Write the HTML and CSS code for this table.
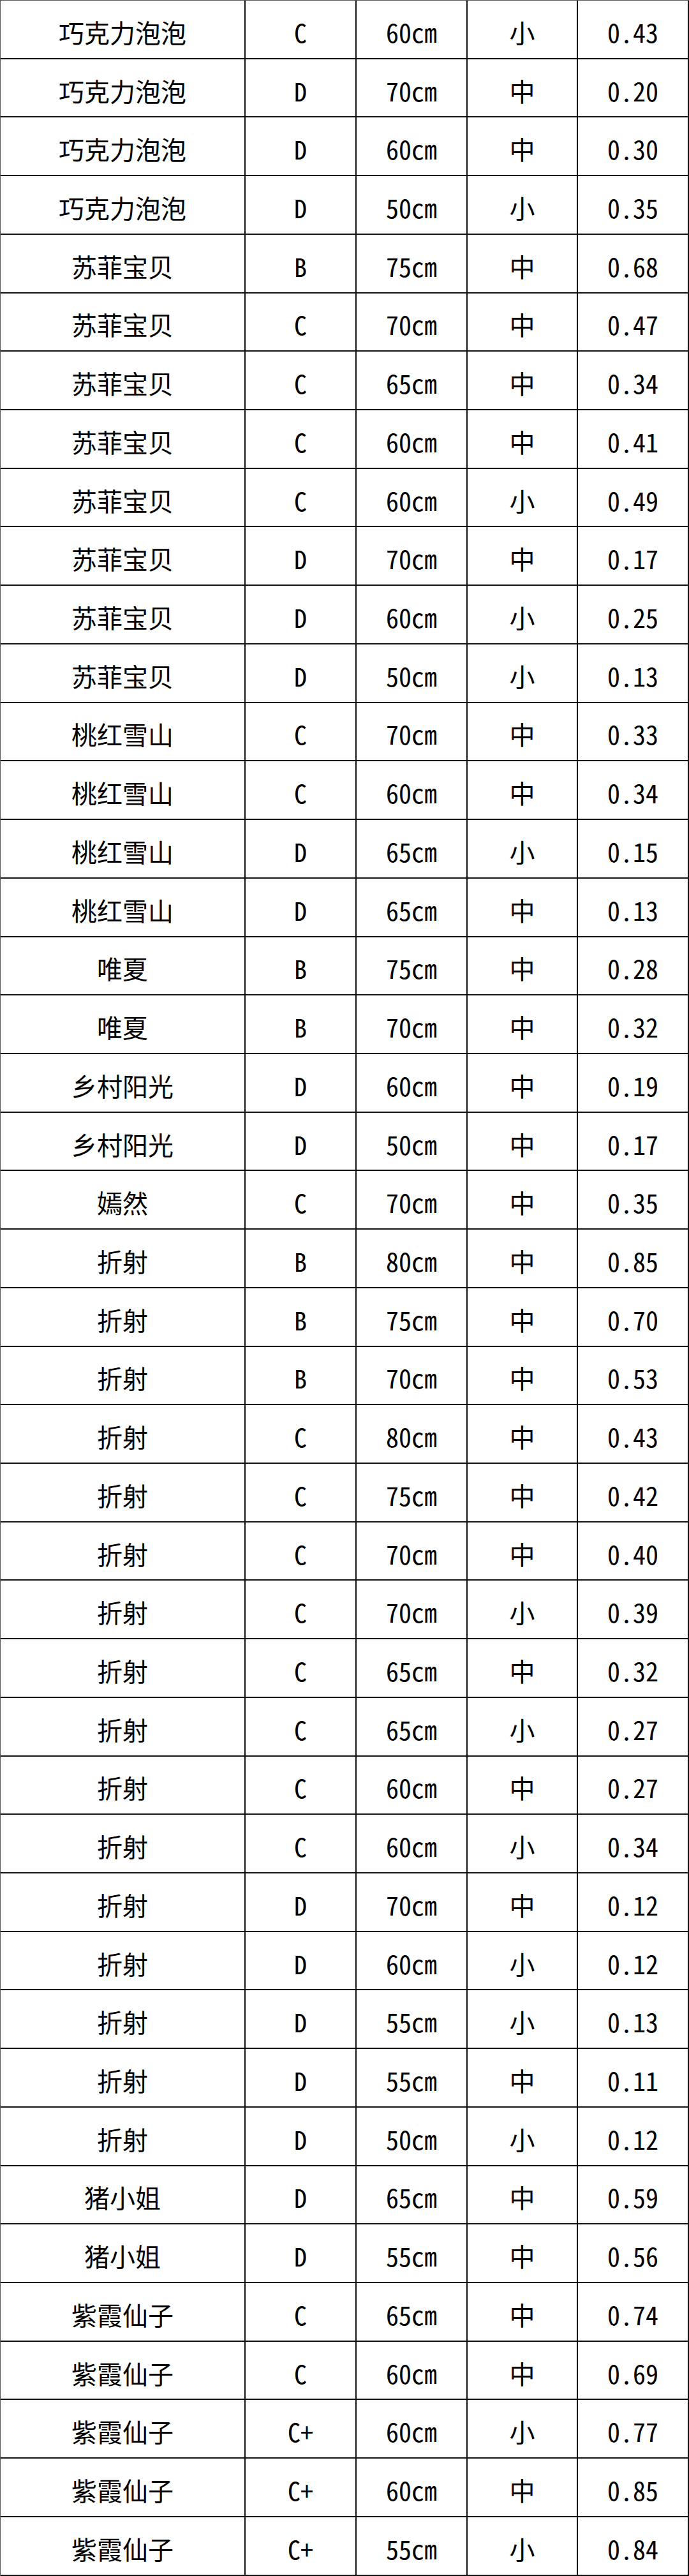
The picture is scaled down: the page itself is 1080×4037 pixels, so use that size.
FILE: index.html
```html
<!DOCTYPE html>
<html lang="zh-CN">
<head>
<meta charset="utf-8">
<title>品种规格表</title>
<link rel="stylesheet" href="styles.css">
</head>
<body>
<div class="sheet">
<div class="c">巧克力泡泡</div><div class="c">C</div><div class="c">60cm</div><div class="c">小</div><div class="c">0.43</div>
<div class="c">巧克力泡泡</div><div class="c">D</div><div class="c">70cm</div><div class="c">中</div><div class="c">0.20</div>
<div class="c">巧克力泡泡</div><div class="c">D</div><div class="c">60cm</div><div class="c">中</div><div class="c">0.30</div>
<div class="c">巧克力泡泡</div><div class="c">D</div><div class="c">50cm</div><div class="c">小</div><div class="c">0.35</div>
<div class="c">苏菲宝贝</div><div class="c">B</div><div class="c">75cm</div><div class="c">中</div><div class="c">0.68</div>
<div class="c">苏菲宝贝</div><div class="c">C</div><div class="c">70cm</div><div class="c">中</div><div class="c">0.47</div>
<div class="c">苏菲宝贝</div><div class="c">C</div><div class="c">65cm</div><div class="c">中</div><div class="c">0.34</div>
<div class="c">苏菲宝贝</div><div class="c">C</div><div class="c">60cm</div><div class="c">中</div><div class="c">0.41</div>
<div class="c">苏菲宝贝</div><div class="c">C</div><div class="c">60cm</div><div class="c">小</div><div class="c">0.49</div>
<div class="c">苏菲宝贝</div><div class="c">D</div><div class="c">70cm</div><div class="c">中</div><div class="c">0.17</div>
<div class="c">苏菲宝贝</div><div class="c">D</div><div class="c">60cm</div><div class="c">小</div><div class="c">0.25</div>
<div class="c">苏菲宝贝</div><div class="c">D</div><div class="c">50cm</div><div class="c">小</div><div class="c">0.13</div>
<div class="c">桃红雪山</div><div class="c">C</div><div class="c">70cm</div><div class="c">中</div><div class="c">0.33</div>
<div class="c">桃红雪山</div><div class="c">C</div><div class="c">60cm</div><div class="c">中</div><div class="c">0.34</div>
<div class="c">桃红雪山</div><div class="c">D</div><div class="c">65cm</div><div class="c">小</div><div class="c">0.15</div>
<div class="c">桃红雪山</div><div class="c">D</div><div class="c">65cm</div><div class="c">中</div><div class="c">0.13</div>
<div class="c">唯夏</div><div class="c">B</div><div class="c">75cm</div><div class="c">中</div><div class="c">0.28</div>
<div class="c">唯夏</div><div class="c">B</div><div class="c">70cm</div><div class="c">中</div><div class="c">0.32</div>
<div class="c">乡村阳光</div><div class="c">D</div><div class="c">60cm</div><div class="c">中</div><div class="c">0.19</div>
<div class="c">乡村阳光</div><div class="c">D</div><div class="c">50cm</div><div class="c">中</div><div class="c">0.17</div>
<div class="c">嫣然</div><div class="c">C</div><div class="c">70cm</div><div class="c">中</div><div class="c">0.35</div>
<div class="c">折射</div><div class="c">B</div><div class="c">80cm</div><div class="c">中</div><div class="c">0.85</div>
<div class="c">折射</div><div class="c">B</div><div class="c">75cm</div><div class="c">中</div><div class="c">0.70</div>
<div class="c">折射</div><div class="c">B</div><div class="c">70cm</div><div class="c">中</div><div class="c">0.53</div>
<div class="c">折射</div><div class="c">C</div><div class="c">80cm</div><div class="c">中</div><div class="c">0.43</div>
<div class="c">折射</div><div class="c">C</div><div class="c">75cm</div><div class="c">中</div><div class="c">0.42</div>
<div class="c">折射</div><div class="c">C</div><div class="c">70cm</div><div class="c">中</div><div class="c">0.40</div>
<div class="c">折射</div><div class="c">C</div><div class="c">70cm</div><div class="c">小</div><div class="c">0.39</div>
<div class="c">折射</div><div class="c">C</div><div class="c">65cm</div><div class="c">中</div><div class="c">0.32</div>
<div class="c">折射</div><div class="c">C</div><div class="c">65cm</div><div class="c">小</div><div class="c">0.27</div>
<div class="c">折射</div><div class="c">C</div><div class="c">60cm</div><div class="c">中</div><div class="c">0.27</div>
<div class="c">折射</div><div class="c">C</div><div class="c">60cm</div><div class="c">小</div><div class="c">0.34</div>
<div class="c">折射</div><div class="c">D</div><div class="c">70cm</div><div class="c">中</div><div class="c">0.12</div>
<div class="c">折射</div><div class="c">D</div><div class="c">60cm</div><div class="c">小</div><div class="c">0.12</div>
<div class="c">折射</div><div class="c">D</div><div class="c">55cm</div><div class="c">小</div><div class="c">0.13</div>
<div class="c">折射</div><div class="c">D</div><div class="c">55cm</div><div class="c">中</div><div class="c">0.11</div>
<div class="c">折射</div><div class="c">D</div><div class="c">50cm</div><div class="c">小</div><div class="c">0.12</div>
<div class="c">猪小姐</div><div class="c">D</div><div class="c">65cm</div><div class="c">中</div><div class="c">0.59</div>
<div class="c">猪小姐</div><div class="c">D</div><div class="c">55cm</div><div class="c">中</div><div class="c">0.56</div>
<div class="c">紫霞仙子</div><div class="c">C</div><div class="c">65cm</div><div class="c">中</div><div class="c">0.74</div>
<div class="c">紫霞仙子</div><div class="c">C</div><div class="c">60cm</div><div class="c">中</div><div class="c">0.69</div>
<div class="c">紫霞仙子</div><div class="c">C+</div><div class="c">60cm</div><div class="c">小</div><div class="c">0.77</div>
<div class="c">紫霞仙子</div><div class="c">C+</div><div class="c">60cm</div><div class="c">中</div><div class="c">0.85</div>
<div class="c">紫霞仙子</div><div class="c">C+</div><div class="c">55cm</div><div class="c">小</div><div class="c">0.84</div>
</div>
</body>
</html>
```

FILE: styles.css
```css
html, body {
  margin: 0;
  padding: 0;
  background: #ffffff;
}

.sheet {
  display: grid;
  grid-template-columns: 384px 174px 174px 173px 174px;
  grid-auto-rows: 91.727px;
  width: 1080px;
  box-sizing: border-box;
  border-left: 1px solid #555555;
  border-top: 1px solid #555555;
  font-family: "Noto Sans Mono CJK SC", "Noto Sans CJK SC", monospace;
  font-size: 40px;
  color: #000000;
}

.c {
  box-sizing: border-box;
  border-right: 2px solid #111111;
  border-bottom: 2px solid #111111;
  display: flex;
  align-items: center;
  justify-content: center;
  padding-top: 8px;
  white-space: pre;
  line-height: 1;
}
```
